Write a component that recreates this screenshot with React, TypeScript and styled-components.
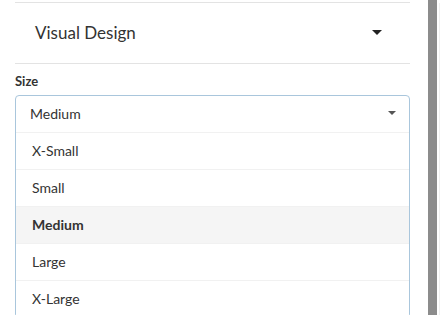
import React, { useState } from 'react';
import styled, { createGlobalStyle } from 'styled-components';

const GlobalStyle = createGlobalStyle`
  html, body {
    margin: 0;
    padding: 0;
    background: #ffffff;
    overflow: hidden;
  }
  body {
    font-family: Lato, "Open Sans", "Liberation Sans", sans-serif;
    color: #333;
  }
`;

const Page = styled.div`
  display: flex;
  width: 448px;
  height: 315px;
  overflow: hidden;
`;

const Panel = styled.div`
  width: 395px;
  padding-left: 15px;
  flex-shrink: 0;
`;

const Gutter = styled.div`
  width: 18px;
  flex-shrink: 0;
`;

const ScrollThumb = styled.div`
  width: 9px;
  height: 315px;
  background: #8c8c8c;
  flex-shrink: 0;
`;

const SidePane = styled.div`
  flex: 1;
  margin-left: 2px;
  margin-top: 3px;
  border-left: 1px solid #f0f0f0;
`;

const SectionHeader = styled.div`
  margin-top: 2px;
  height: 62px;
  box-sizing: border-box;
  border-top: 1px solid #e3e3e3;
  border-bottom: 1px solid #e3e3e3;
  display: flex;
  align-items: center;
  justify-content: space-between;
  padding: 0 28px 2px 20px;
`;

const SectionTitle = styled.span`
  font-size: 17px;
  color: #333;
`;

const Caret = styled.span<{ size: 'lg' | 'sm' }>`
  width: 0;
  height: 0;
  border-left: ${p => (p.size === 'lg' ? 5 : 4)}px solid transparent;
  border-right: ${p => (p.size === 'lg' ? 5 : 4)}px solid transparent;
  border-top: ${p => (p.size === 'lg' ? 5 : 4)}px solid ${p => (p.size === 'lg' ? '#222' : '#555')};
`;

const FieldLabel = styled.div`
  margin-top: 9px;
  font-size: 13px;
  font-weight: 700;
  line-height: 16px;
  color: #333;
`;

const Combo = styled.div`
  margin-top: 6px;
  border: 1px solid #a9c6dc;
  border-radius: 4px;
  overflow: hidden;
`;

const SelectBox = styled.div`
  height: 36px;
  box-sizing: border-box;
  display: flex;
  align-items: center;
  justify-content: space-between;
  padding: 0 13px 2px 14px;
  font-size: 14px;
  color: #333;
`;

const Option = styled.div<{ selected?: boolean }>`
  height: 37px;
  box-sizing: border-box;
  border-top: 1px solid #f1f1f1;
  display: flex;
  align-items: center;
  padding: 0 0 2px 16px;
  font-size: 14px;
  color: #333;
  font-weight: ${p => (p.selected ? 700 : 400)};
  background: ${p => (p.selected ? '#f5f5f5' : '#fff')};
`;

const sizes = ['X-Small', 'Small', 'Medium', 'Large', 'X-Large'];

export default function App() {
  const [value, setValue] = useState('Medium');

  return (
    <Page>
      <GlobalStyle />
      <Panel>
        <SectionHeader>
          <SectionTitle>Visual Design</SectionTitle>
          <Caret size="lg" />
        </SectionHeader>
        <FieldLabel>Size</FieldLabel>
        <Combo>
          <SelectBox>
            <span>{value}</span>
            <Caret size="sm" />
          </SelectBox>
          {sizes.map(s => (
            <Option key={s} selected={s === value} onClick={() => setValue(s)}>
              {s}
            </Option>
          ))}
        </Combo>
      </Panel>
      <Gutter />
      <ScrollThumb />
      <SidePane />
    </Page>
  );
}
